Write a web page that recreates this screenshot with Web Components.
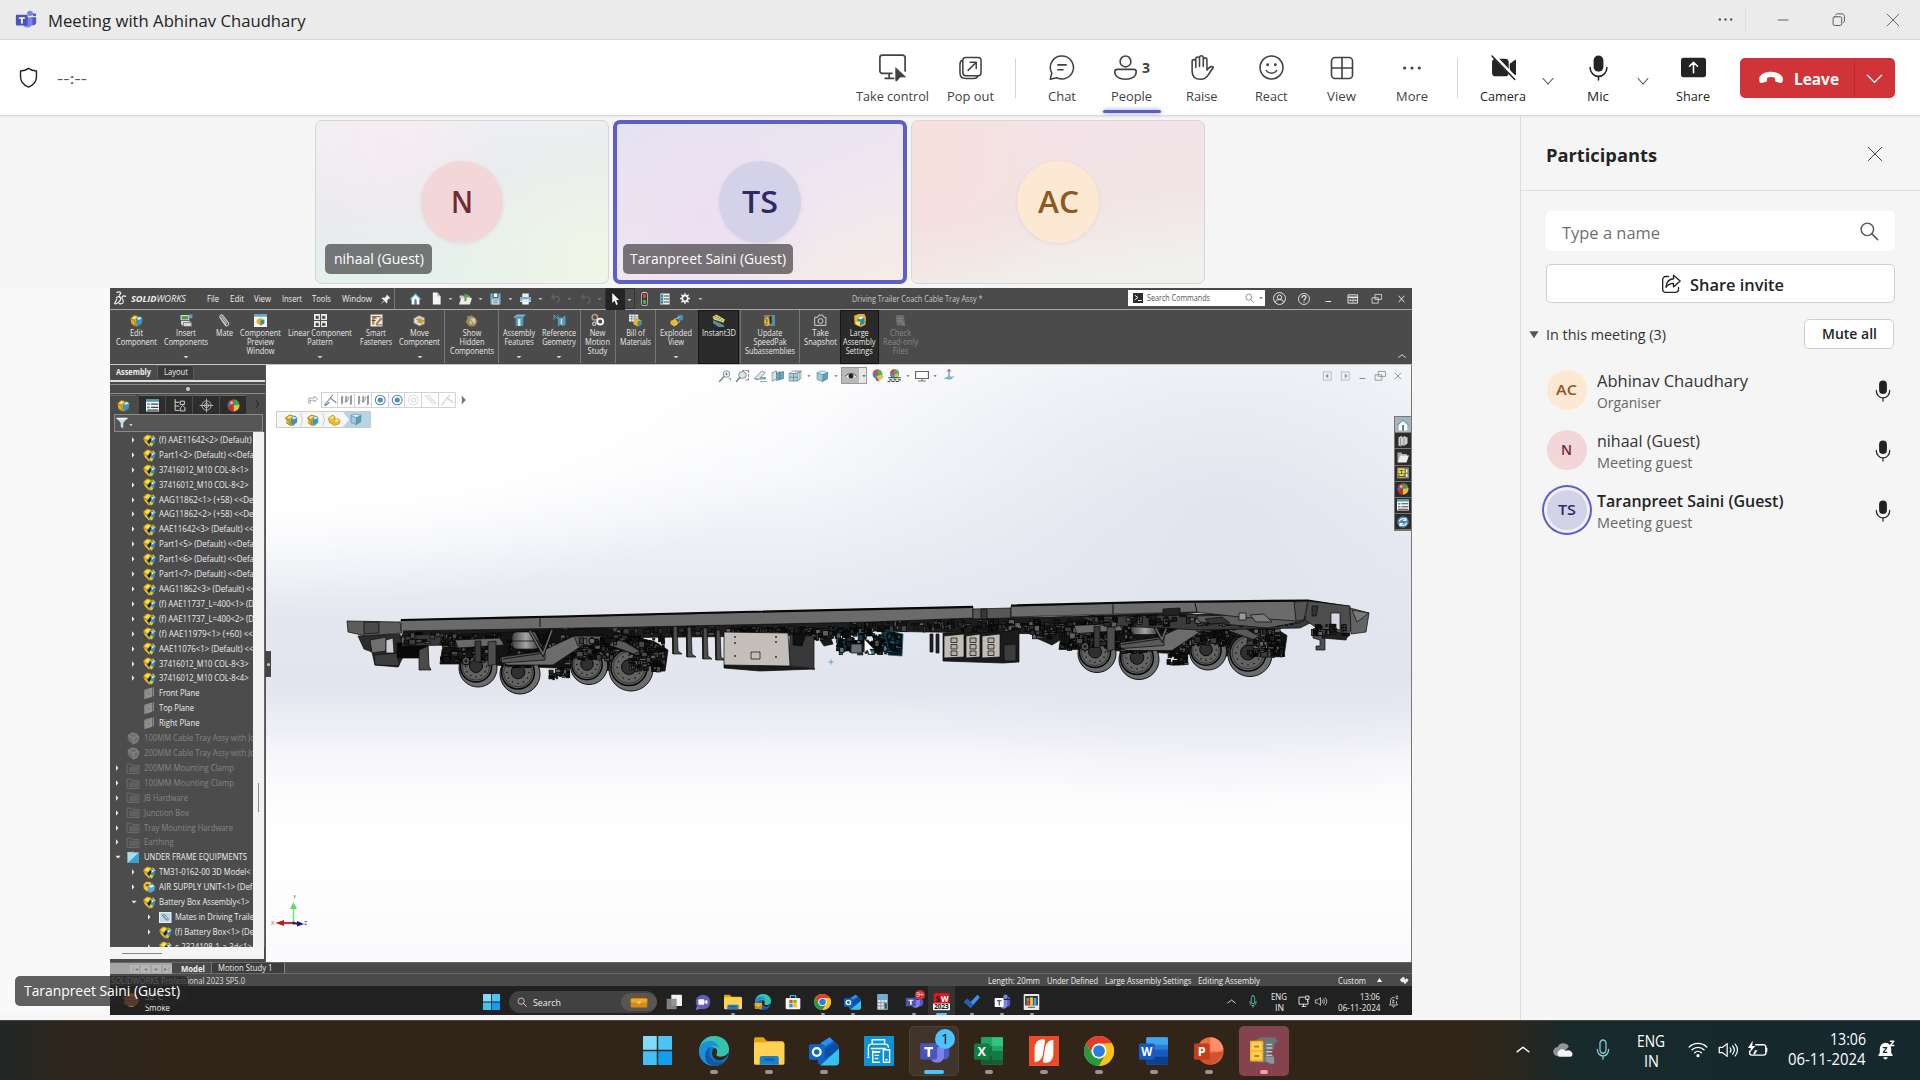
<!DOCTYPE html>
<html lang="en">
<head>
<meta charset="utf-8">
<title>Meeting with Abhinav Chaudhary</title>
<style>
html,body{margin:0;height:100%}
body{width:1920px;height:1080px;overflow:hidden;font-family:"Open Sans","Noto Sans",sans-serif;background:#f5f5f5;color:#242424}
</style>
</head>
<body>
<meeting-app></meeting-app>
<script>
const BASE=`*{box-sizing:border-box}:host{display:block}svg{display:block;overflow:visible}`;
class Base extends HTMLElement{
  connectedCallback(){
    if(this.shadowRoot)return;
    this.attachShadow({mode:'open'}).innerHTML=`<style>${BASE}${this.css?this.css():''}</style>${this.html()}`;
    if(this.ready)this.ready();
  }
  a(n,d=''){return this.hasAttribute(n)?this.getAttribute(n):d}
}
/* Lays children out left to right at given starts, as margins of a flex row */
const flow=(x0,items)=>{let x=x0;return items.map(([l,w,h,st=''])=>{const s=`<div style="flex:none;margin-left:${(l-x).toFixed(2)}px;width:${w}px;${st}">${h}</div>`;x=l+w;return s}).join('')};
const T=(w,t,st='')=>`<fit-text w="${w}" style="${st}">${t}</fit-text>`;
const esc=s=>s.replace(/</g,'&lt;').replace(/>/g,'&gt;');

/* Text squeezed or stretched to a given width */
customElements.define('fit-text',class extends Base{
  css(){return `:host{flex:none;white-space:nowrap}span{display:inline-block;transform-origin:0 50%;text-align:center}`}
  html(){return `<span><slot></slot></span>`}
  ready(){const w=+this.a('w'),s=this.shadowRoot.querySelector('span');this.style.width=w+'px';const n=s.getBoundingClientRect().width;if(n)s.style.transform=`scaleX(${w/n})`}
});

const S=(d,w=1.3,c='currentColor')=>`<path d="${d}" fill="none" stroke="${c}" stroke-width="${w}" stroke-linecap="round" stroke-linejoin="round"/>`;
const F=(d,c='currentColor')=>`<path d="${d}" fill="${c}"/>`;
const R=(x,y,w,h,c,r=0,e='')=>`<rect x="${x}" y="${y}" width="${w}" height="${h}" rx="${r}" fill="${c}" ${e}/>`;
const C=(x,y,r,c,e='')=>`<circle cx="${x}" cy="${y}" r="${r}" fill="${c}" ${e}/>`;
const TX=(x,y,s,t,c='#fff',w=700)=>`<text x="${x}" y="${y}" font-size="${s}" font-weight="${w}" fill="${c}" text-anchor="middle" font-family="Open Sans,sans-serif">${t}</text>`;
const ICONS={
 teams:C(17.2,4.2,3.4,'#7b83eb')+C(22.2,6,2,'#5059c9')+F('M19 9h5.2v7a3.6 3.6 0 0 1-5.2 3z','#5059c9')+F('M9 9h11v8.500a5.800 5.800 0 0 1-11 1z','#7b83eb')+R(1,6,13.500,13.500,'#4b53bc',1.200)+F('M4.300 9h7v1.900H8.900v6.300H6.800v-6.300H4.300z','#fff'),
 teamsLight:C(17.2,4.2,3.4,'#7b83eb')+C(22.2,6,2,'#5059c9')+F('M19 9h5.2v7a3.6 3.6 0 0 1-5.2 3z','#5059c9')+F('M9 9h11v8.500a5.800 5.800 0 0 1-11 1z','#7b83eb')+R(1,6,13.500,13.500,'#fff',1.200)+F('M4.300 9h7v1.900H8.900v6.300H6.800v-6.300H4.300z','#4b53bc'),
 shield:S('M12 2.500c2.700 2 5.400 2.600 8.300 2.700v6.300c0 5-3 8.300-8.300 10.500-5.300-2.200-8.300-5.500-8.300-10.500V5.200C6.600 5.100 9.300 4.500 12 2.500z',1.500),
 control:S('M11.500 17.200H3A2.200 2.200 0 0 1 .8 15V3.200A2.200 2.200 0 0 1 3 1h18a2.200 2.200 0 0 1 2.200 2.200V15M9 17.500v4M5.500 21.700h7.500',1.5)+F('M14.500 11.500l9.800 9.200h-5.300l-3 3.300c-.6.6-1.500.4-1.500-.6z'),
 popout:S('M7 1.500h13a3 3 0 0 1 3 3v13a3 3 0 0 1-3 3H7a3 3 0 0 1-3-3v-13a3 3 0 0 1 3-3zM4 4.500C2 5 1 6 1 8.500v9c0 4 2 6 6 6h8c2.500 0 4.300-1 4.800-2.800M9.500 15l8-8M11.500 6.500h6.500V13',1.6),
 chat:S('M12.500 1a11 11 0 1 1-5 20.800L1.200 23.200l1.500-5.800A11 11 0 0 1 12.500 1zM8.500 9.500h8M8.500 14.200h5',1.5),
 people:C(12,6.2,5.2,'none','stroke="currentColor" stroke-width="1.5"')+S('M4 13.800h16a2.300 2.300 0 0 1 2.300 2.300c0 4.600-4.600 7.200-10.300 7.200S1.700 20.700 1.700 16.100A2.300 2.300 0 0 1 4 13.800z',1.5),
 hand:S('M3 13V6.200a1.700 1.700 0 0 1 3.500 0V12M6.500 11V3.700a1.700 1.700 0 0 1 3.600 0V11M10.100 10.500V2.500a1.700 1.700 0 0 1 3.600 0V11M13.700 11V4.500a1.700 1.700 0 0 1 3.500 0v10c2-2.800 3.500-3.800 5.500-3.200.8.3.8 1 .2 1.600-1.700 1.500-2.700 3.600-4.200 6-1.700 2.800-3.800 4.400-7.500 4.400C5.500 23.300 3 20 3 15.500V12',1.5),
 smile:C(12,12,11,'none','stroke="currentColor" stroke-width="1.5"')+C(8.300,9.300,1.400,'currentColor')+C(15.700,9.300,1.400,'currentColor')+S('M7 15c2.500 3.300 7.500 3.300 10 0',1.5),
 view:S('M5 1.500h14A3.500 3.500 0 0 1 22.500 5v14a3.500 3.500 0 0 1-3.500 3.500H5A3.500 3.500 0 0 1 1.500 19V5A3.500 3.500 0 0 1 5 1.500zM12 1.500v21M1.500 12h21',1.6),
 dots:C(4,12,1.7,'currentColor')+C(12,12,1.7,'currentColor')+C(20,12,1.7,'currentColor'),
 camoff:F('M4.500 3.500h9A3.500 3.500 0 0 1 17 7v10a3.500 3.500 0 0 1-3.500 3.500h-9A3.500 3.500 0 0 1 1 17V7a3.500 3.500 0 0 1 3.500-3.500zM18 8.500l5-3.800c.5-.3 1 0 1 .5v13.600c0 .6-.5.8-1 .5l-5-3.800z')+S('M2.500.5L24 23',3.6,'#fff')+S('M1 1l21.800 22.500',1.5),
 mic:R(7.300,.5,9.400,15.500,'currentColor',4.700)+S('M4 12v.5a8 8 0 0 0 16 0V12M12 20.500V24',1.500),
 micO:S('M12 1.200a4 4 0 0 1 4 4v7a4 4 0 0 1-8 0v-7a4 4 0 0 1 4-4zM4.500 12a7.500 7.500 0 0 0 15 0M12 19.500V23',1.7),
 share:R(0,2.700,24,18.600,'currentColor',2.5)+S('M12 17V7M8.200 10.800L12 7l3.800 3.800',1.5,'#fff'),
 chev:S('M2 7.500L12 17.500l10-10',1.8), chevU:S('M2 17L12 7l10 10',2.6), chevR:S('M7 2l10 10L7 22',3),
 phone:F('M12 5.800c5.400 0 10 2.200 11.500 5.400.6 1.600.5 3.400-.1 4.700-.4.900-1 1.200-2 1l-3.900-.9c-.9-.2-1.300-.7-1.400-1.600l-.3-2.700c-2.500-.9-5.100-.9-7.600 0l-.3 2.700c-.1.900-.5 1.400-1.400 1.600l-3.900.9c-1 .2-1.600-.1-2-1-.6-1.300-.7-3.100-.1-4.700C2 8 6.600 5.800 12 5.800z'),
 x:S('M2 2l20 20M22 2L2 22',1.5), xs:S('M3 3l18 18M21 3L3 21',3), min:S('M2 12h20',1.8), mins:S('M3 20h17',3),
 max:S('M5 7h10a3 3 0 0 1 3 3v10a3 3 0 0 1-3 3H5a3 3 0 0 1-3-3V10a3 3 0 0 1 3-3zM7 3.500C7.500 2 8.500 1.500 10 1.500h8c3 0 5 2 5 5v8c0 1.500-.5 2.500-2 3',1.8),
 search:C(10,10,7.500,'none','stroke="currentColor" stroke-width="1.7"')+S('M15.500 15.500L22.500 22.500',1.9),
 invite:S('M9 3H5.500A3.500 3.500 0 0 0 2 6.500v12A3.500 3.500 0 0 0 5.500 22h12a3.500 3.500 0 0 0 3.500-3.500V16M15 1.500L23 8.500l-8 7v-4.200c-4 0-6.500 1.200-9 4.700C6.500 9.500 10 6 15 5.700z',1.6),
 tri:F('M1 5h22L12 20z'), triR:F('M6 1v22L20 12z'), caret:F('M2 7h20L12 18z'),
 win:['0 0','12.6 0','0 12.6','12.6 12.6'].map((p,i)=>{const[q,r]=p.split(' ');return R(q,r,11.400,11.400,['#7fdcfb','#4cc4f8','#45bff6','#149df0'][i],.5)}).join(''),
 edge:C(12,12,12,'#1577c9')+F('M.300 10C1.500 3.500 6.500 0 12 0c7 0 12 4.500 12 10.500 0 4-3 6-6.500 6-3 0-4-1-3.500-2.200 1.200-2.500-.5-5.800-4-5.800C6 8.500 1.500 9 .3 14z','#36c3ae')+F('M.200 10C2 5 6 3.500 9.500 4c4 .5 6.500 3 7 7 0-2-2.500-3.500-6-3-4.500.7-6.500 4.500-5.500 9 1 4 4.500 6.700 8 7C5 24 0 19 0 12z','#1b8fd8')+F('M9.500 9C7 12 8 20 15 20.800c3 .3 5.500-.7 7.300-2.200C20 22 16.500 24 12.500 24 7 23.500 4.500 19 5 15.500 5.500 12 7.500 10 9.500 9z','#0c59a4')+F('M12 9.500c2.300 0 3.300 2.600 2 4.800-.6 1.200.4 2.200 3.500 2.200 3 0 5-1.300 6-3.500C23 17 20 19.500 16.500 19.500 11 19.500 8.500 13 12 9.500z','#31251a'),
 folder:F('M1.500 1h6l2.500 3H22a1.500 1.500 0 0 1 1.500 1.500V12H0V2.500A1.500 1.500 0 0 1 1.500 1z','#e5a50a')+R(0,5,24,18,'#ffd252',1.5)+F('M4.500 23v-5.500A1.500 1.500 0 0 1 6 16h12a1.500 1.500 0 0 1 1.500 1.500V23z','#1b7fd0')+R(8,18,8,1.500,'#0b5ba0',.7),
 outlook:F('M7 7.500L16.500 1l7 6.500v13A2.500 2.500 0 0 1 21 23H9.500A2.500 2.500 0 0 1 7 20.500z','#0f62c0')+F('M9.500 5.600l7-4.600 3 2.800L8 11.500z','#2f8ff0')+F('M12 11l9-6 2.500 2.500V12L11 19z','#0b4ea5')+F('M24 10v11a2.500 2.500 0 0 1-2.500 2.500H9z','#36c0f2')+R(0,6.500,12.500,12.500,'#1066c8',1.300)+C(6.200,12.800,3.100,'none','stroke="#fff" stroke-width="1.800"'),
 printer:R(0,0,24,24,'#0b93d3')+S('M6.500 6V3h10v3M3.500 15.500V9a2.500 2.500 0 0 1 2.500-2.500h11A2.500 2.500 0 0 1 19.500 9M6 10h11M4 17H3M7 13h5M7 12v9h5.500M12.500 12.500H7M9 15.500h2.500M9 18h2',1.100,'#fff')+S('M15.500 11h5v10h-5zM17.500 19h1',1.100,'#fff'),
 excel:R(6,1,18,22,'#21a366',1.500)+R(6,1,9,7.300,'#21a366')+R(15,1,9,7.300,'#33c481')+R(6,8.300,9,7.300,'#107c41')+R(15,8.300,9,7.300,'#21a366')+R(6,15.600,18,7.400,'#185c37')+R(15,12,9,7,'#107c41')+R(0,6,13,13,'#107c41',1.200)+TX(6.500,16.400,10.500,'X'),
 nitro:R(0,0,24,24,'#ee4a23')+F('M4.500 21V10c0-4.500 2.500-7.500 6.500-7.500 2 0 2.200 1.500 2 3.500l-1.200 7c-.7 4-3 7.500-7.300 8z','#fff')+F('M19.500 3v11c0 4.500-2.500 7.500-6.500 7.500-2 0-2.200-1.500-2-3.500l1.200-7c.7-4 3-7.500 7.300-8z','#fff')+S('M13.200 4.500L10.800 19.500',.9,'#ee4a23'),
 chrome:C(12,12,12,'#fbc116')+F('M1.600 6A12 12 0 0 1 22.400 6H12a6 6 0 0 0-5.200 9z','#e33b2e')+F('M1.600 6A12 12 0 0 0 12 24l5.200-9A6 6 0 0 1 6.800 15z','#249a41')+F('M22.400 6A12 12 0 0 1 12 24l5.200-9a6 6 0 0 0 0-9z','#fbc116')+C(12,12,6,'#fff')+C(12,12,4.700,'#2a7de1'),
 word:R(6,1,18,22,'#2b7cd3',1.500)+R(6,1,18,6,'#41a5ee',1)+R(6,11,18,6,'#185abd')+R(6,16.500,18,6.500,'#103f91',1)+R(0,6,13,13,'#185abd',1.200)+TX(6.500,16,9.500,'W'),
 ppt:C(13.500,12,11,'#ed6c47')+F('M13.500 1a11 11 0 0 1 10.800 9L22 13l-8.500-1z','#ff8f6b')+F('M3 15c3 10 18 11 21.500-3z','#d35230')+R(0,6,13,13,'#c43e1c',1.200)+TX(6.500,16.400,10.500,'P'),
 zip:F('M4 4l5-3h12l2 3-3 3v4l-4 1-3 10H7l-3-3z','#68747a')+R(0,4,11,17,'#f7b322',1)+R(1.200,5.200,8.600,6.500,'#ffd257',.5)+R(1.200,13,8.600,6.500,'#ffd257',.5)+R(3.500,8,4,1.500,'#b87c0b')+R(3.500,15.800,4,1.500,'#b87c0b')+S('M14 7h4M14 10h4M14 13h4M14 16h4',1.300,'#bbc3c7')+F('M13 17h7v6h-3l-4-2z','#8b979c'),
 cloud:F('M6 19.500a5.500 5.500 0 0 1-.500-11A7.500 7.500 0 0 1 19 8l-9 9z','#8f9698')+F('M7 20a5 5 0 0 1 0-7c3-3 6-2 8 0 4-2 8.500.500 8.500 4a3.300 3.300 0 0 1-3.500 3z','#f4f4f4'),
 wifi:S('M1.500 9.500a15 15 0 0 1 21 0M4.800 13a10.300 10.300 0 0 1 14.400 0M8 16.500a5.700 5.700 0 0 1 8 0',1.700)+C(12,20,1.900,'currentColor'),
 speaker:S('M1.500 8.500h4L11 3.500v17l-5.500-5h-4zM14.500 9a5 5 0 0 1 0 6M17.500 6.500a9 9 0 0 1 0 11M20.500 4a12.500 12.500 0 0 1 0 16',1.500),
 battery:S('M10 6h9a2.500 2.500 0 0 1 2.500 2.500v8A2.500 2.500 0 0 1 19 19H5.500A2.500 2.500 0 0 1 3 16.500V14M22.500 10.500v4',1.600)+F('M6.500 1L1 10h3.500L3 16l6.500-8.500H6z')+F('M7 18l2-5 3 0-3 5z'),
 bell:F('M12 4a6.500 6.500 0 0 1 6.500 6.500V15l2 3.500h-17l2-3.500v-4.500A6.500 6.500 0 0 1 12 4zM9.500 20h5c-.5 3-4.500 3-5 0z')+S('M9.500 9.500h4l-4 5h4',1.400,'#15262a')+S('M17.500 2.500h4l-4 4.500h4',1.600),
 bellO:S('M14 4.500a6.500 6.500 0 0 0-8.500 6V15l-2 3.500h17l-2-3.500v-3M9.500 20.500c.5 2.500 4.500 2.500 5 0M9.500 9.500h4l-4 5h4M17.500 2h4l-4 5h4',1.500),
 pc:S('M13 4H2v13h18v-6M8 21h8M11 17v4M16 2h6v6h-6zM19 8v4',1.700),
 pin:F('M14 1l9 9-2 1-2-.500-4 5 .500 5-2 2-5-6L2 23l-1-1 6.500-6.500-6-5 2-2 5 .500 5-4L13 3z'),
 home:F('M12 1L0 12h3.500v11H10v-7h4v7h6.500V12H24z','#fff')+S('M1 12L12 2l11 10',2.500,'#4fa7c9')+R(10,12,4,11,'#4689a3'),
 doc:F('M4 1h10l7 7v15H4z','#f4f4f4')+F('M14 1v7h7z','#aaa'),
 open:F('M1 5h7l2 2h11v4H1z','#c5c5c5')+F('M4 10h20l-4 13H0z','#eee')+F('M10 1l9 4-2 3-3-1v9l-4 1z','#5fa54a'),
 save:R(1,1,22,22,'#6db7d4')+R(6,1,12,8,'#333')+R(8,1,8,7,'#fff')+R(5,13,14,10,'#e8e8e8')+R(7,15,10,1.500,'#555')+R(7,19,10,1.500,'#555'),
 print:R(5,1,14,8,'#eee')+R(0,8,24,8,'#6db7d4')+R(5,13,14,10,'#fff')+R(0,16,24,2,'#dcdcdc'),
 undo:S('M4 8l5-5M4 8l5 5M4 8h11c7 0 7 11 1 12',3),
 arrow:F('M5 0v20l5-4.500L13.500 24l3.500-1.500L13.500 14H20z','#fff'),
 traffic:R(5,0,14,24,'#d8d8d8',5)+R(6.5,1.5,11,21,'#333',3)+C(12,7,4,'#e8372c')+C(12,17,4,'#42b447'),
 opts:R(1,1,22,22,'#eaf4f8')+R(1,1,7,22,'#6db7d4')+S('M3 6h3M3 12h3M3 18h3M10.500 6H21M10.500 12H21M10.500 18H21',2,'#333'),
 gear:C(12,12,6.500,'none','stroke="currentColor" stroke-width="4"')+S('M12 1v4M12 19v4M1 12h4M19 12h4M4.200 4.200L7 7M17 17l2.800 2.800M19.800 4.200L17 7M7 17l-2.800 2.800',3),
 asm:F('M1 8l7-6 7 2-2 4 3 3-5 3 3 8-4 1-7-4z','#e3b426')+F('M3 8l6-4 4 1-5 4z','#ffec8b')+F('M11 8l7-4 5 4-1 9-7 6-4-5z','#3d93b8')+F('M12 8l6-3 4 3-6 3z','#c9e9f3')+S('M1 8l7-6 7 2 5 1M3 18l7 5 6-1M2 9l6 3 2 9',1.2,'#7c5f10'),
 asmt:F('M1 6l7-5 7 2 5 5-2 8-7 4-6-3-4-6z','#c99c12')+F('M3 7l6-4 5 2-3 5-4 1z','#ffe03e')+F('M12 8l7-3 4 4-1 9-9 5-2-6z','#3e8db0')+F('M13 10l6-3 2 3-5 4z','#d1ecf5')+S('M4 14l8 9M19 4l4 5',2,'#f1d64a')+F('M8 15l6-7 3 3-5 8z','#222')+F('M14 16l6 3-3 5-5-3z','#e9c72b'),
 asm2:F('M1 6l6-5 9 2-1 6-5 3 4 5-7 3-6-6z','#efc62b')+F('M10 9l8-4 5 4-1 9-8 5-5-4z','#57a9cb')+F('M11 10l7-3 3 3-6 3z','#dff3f9')+F('M4 8l5-3 3 2-4 4z','#7a5d05'),
 part:F('M1 8l8-6 5 3v6l6-2 4 4-2 7-9 3-10-6z','#e8bd32')+F('M3 8l7-4 3 2-6 4zM13 12l6-2 3 2-6 4z','#fff0a0')+S('M1 8l8-6 5 3v6l6-2 4 4-2 7-9 3-10-6z',1,'#8c701b'),
 cube:F('M2 6l9-4 11 3-1 13-9 5-10-4z','#9ecadd')+F('M2 6l9-4 11 3-9 4z','#d9eff6')+F('M13 9l9-4-1 13-9 5z','#5f9dba')+S('M2 6l11 3-1 14M13 9l9-4M2 6v13l10 4 9-5 1-13-11-3z',1,'#41768c'),
 wirecube:R(1,7,15,15,'#a9d3e3')+S('M1 7h15v15H1zM1 7l6-5h15v15l-6 5M16 7l6-5M1 14.500h15M8.500 7v15M12 4h9M19 5v14',1.200,'#55727f'),
 green:R(1,2,16,9,'#d9ead4')+R(3,4,12,6,'#4e9b4a')+F('M2 12h15l5 4v7H7l-5-4z','#ddd')+S('M2 12h14l5 4M7 16h14v7H7z',1.300,'#555')+R(16,1,7,7,'#6a9fb5'),
 clip:S('M3 6l10 14c3 4 9 0 6-4L9 3C7 0 2 3 4 6l10 13M7 5l9 12',2,'#c9c9c9'),
 preview:R(0,0,24,24,'#f5f5f5')+R(0,0,24,5,'#5fa9c8')+F('M5 11l7-4 7 4v7l-7 3-7-4z','#e0b125')+F('M12 12l7-2v7l-7 4z','#3b87aa'),
 pattern:R(0,0,11,11,'#eee')+R(13,0,11,11,'#eee')+R(0,13,11,11,'#eee')+R(13,13,11,11,'#eee')+F('M3 3h6v6H3zM15 3h6v6h-6zM3 16h6v6H3zM15 16h6v6h-6z','#667f52')+F('M4 4l4 2-4 2zM16 4l4 2-4 2zM4 17l4 2-4 2zM16 17l4 2-4 2z','#222'),
 fastener:R(1,1,22,22,'#efefef')+F('M4 5h8v4H8v11H4zM10 18L20 6l3 3-10 11z','#c47a35')+S('M4 5h15M4 12h6M12 20h10',1.500,'#444'),
 move:F('M2 8l9-5 10 4v11l-9 4-10-5z','#ddd')+F('M5 10l6-3 4 3-5 3zM7 15l10-8 0 4 5 0-6 7z','#c79c35')+S('M2 8l9-5 10 4v11l-9 4-10-5z',1.500,'#888'),
 hidden:F('M5 4h10l4 4 4 6-5 8-9 1-6-6z','#b78f25')+F('M9 8h10v10H9z','#ccc')+S('M5 4l13 17M2 15l10-12',2,'#8e8e8e'),
 feat:F('M2 6l6-4h14l-3 5v14l-5 2V9H9v12l-4 2V8z','#4d9fbe')+F('M9 9h5v13l-5 0z','#d8edf4')+S('M2 6l6-4h14',1.500,'#a6d8ea'),
 refg:S('M2 10V2l7 7V2',1.500,'#5fb4d6')+F('M9 8l5-3v15l-5 3zM17 6l6-3v17l-6 3z','#4d9fbe')+R(14,8,3,12,'#bfe3ef'),
 motion:C(7,6,5,'none','stroke="#b99a83" stroke-width="3"')+C(17,14,5.500,'none','stroke="#f3f3f3" stroke-width="3.500"')+C(6,18,3,'none','stroke="#bbb" stroke-width="2.500"'),
 bom:R(0,1,17,13,'#eaf4f8')+S('M0 5h17M0 9h17M5 1v13M11 1v13',1,'#567')+F('M8 13l7-5 8 4v8l-7 3-8-4z','#e2b528')+F('M16 14l7-2v8l-7 3z','#388cb0'),
 explode:F('M1 13l8-4 5 4v6l-6 4-7-4z','#e6b92a')+F('M14 3l7-2 3 2v7l-6 3-4-2z','#4490b0')+S('M8 10l9-4M10 20l8-6',1.500,'#ddd'),
 instant:F('M1 5l7-4 16 9-3 6L3 10z','#d9d36a')+F('M2 11l19 9 2 4H12L2 17z','#5f8aa0')+S('M5 6l3-2M9 8l3-2M13 10l3-2M17 13l2-2',1.200,'#444'),
 speed:F('M2 2h20v20H2z','#8d856f')+F('M2 14l6-9 7 12-8 6z','#edc22a')+F('M14 5l8-2v17l-6 3z','#4a94b0')+S('M7 10v5M7 18v1',1.500,'#222')+R(12,4,4,14,'#292929'),
 camera:S('M2 6h5l2-4h7l2 4h4v15H2z',1.700,'#ddd')+C(12,13,4.500,'none','stroke="#ddd" stroke-width="1.700"'),
 large:F('M2 3l8-3h11l3 6-1 14-9 4-11-5z','#e6b52b')+F('M9 7l9-3 3 3v10l-8 4-5-4z','#2b86aa')+F('M9 7l8-3 3 3-7 3z','#f3fafc')+F('M5 14l9 0-2 8-6-2z','#ffe164'),
 check:F('M3 2h15l3 19H5z','#6b6b6b')+S('M6 8h9M7 13h6M12 12l7 9',2,'#868686'),
 ball:C(12,12,11,'#3f79bd')+F('M12 1a11 11 0 0 1 10.800 9L12 12z','#45a04a')+F('M12 1A11 11 0 0 0 2 8l10 4z','#d83c30')+F('M22.800 10A11 11 0 0 1 12 23l0-11z','#efbd32')+F('M12 23A11 11 0 0 1 1.500 15l5-3L12 12z','#c92f27')+C(8.500,7,2.500,'#fff','opacity=".7"'),
 ball2:C(12,10,9,'#3f8bbd')+F('M12 1a9 9 0 0 1 8.800 8L12 11z','#5fae4a')+F('M12 1A9 9 0 0 0 3 8l9 3z','#d05040')+F('M10 14l8-4 6 4-9 9z','#e5c452')+F('M10 14l5 9-6-2z','#b74b3c'),
 scene:C(12,9,8.500,'#4b8dbd')+F('M12 .5a8.500 8.500 0 0 1 8 8L12 10z','#5fae4a')+F('M12 .5A8.500 8.500 0 0 0 4 7l8 3z','#d05040')+F('M12 10l8-2-3 8-5 1z','#e5bf3b')+S('M1 16h22M3 20h4M11 20h4M19 20h4M0 23h3M7 23h4M15 23h4',2,'#444'),
 list:R(0,1,24,22,'#f4f4f4')+R(0,1,24,4,'#4c97b5')+R(2,8,5,3,'#4c97b5')+R(2,14,5,3,'#4c97b5')+S('M10 9.500h12M10 15.500h12M3 20.500h19',2,'#444'),
 conf:S('M4 1v20h7M4 6h7M4 13h7M14 4h7v6h-7zM14 16l4-4 4 4v6h-8z',1.800,'#d6d6d6'),
 target:C(12,12,8.5,'none','stroke="#c5c5c5" stroke-width="1.600"')+C(12,12,4,'none','stroke="#c5c5c5" stroke-width="1.500"')+S('M12 0v24M0 12h24',1.500,'#c5c5c5'),
 funnel:F('M0 1h24l-9 10v12l-6-4v-8z','#bfe3ef')+S('M0 1h24',3,'#fff'),
 plane:F('M4 6l13-4v16L4 22z','#828282')+S('M4 6l13-4v16L4 22zM8 9l7-2v9l-7 2zM20 1v16',1.400,'#a5a5a5'),
 ghost:F('M2 7l8-5 8 2 5 6-3 9-8 4-6-3-5-7z','#6e6e6e')+S('M4 8l8 4 8-4M12 12v10M2 7l8-5 8 2 5 6-3 9-8 4',2,'#868686'),
 fold:S('M1 4h8l2 3h12v15H1z',1.500,'#747474')+R(4,9,17,11,'#606060'),
 bluef:R(1,3,22,20,'#3ba3cf')+F('M1 3h22L1 23z','#a9dcee')+S('M1 3h8l2 -2',1.500,'#ddd'),
 mates:R(0,2,24,21,'#f2f2f2')+R(2,4,20,17,'#bfd8e3')+S('M6 8l8 9c2 2 5 0 3-3l-6-7c-2-2-4 0-3 2l6 7',1.500,'#42748c'),
 zoomfit:C(15,8,6.500,'none','stroke="#6b7f8a" stroke-width="1.800"')+S('M10 13L1 23',3,'#7b8a92')+S('M12 8h6M15 5v6M20 17h3v3',1.200,'#555'),
 zoomarea:C(12,10,7,'#dbe6ea','stroke="#6b7f8a" stroke-width="1.600"')+S('M7 15L1 23',3,'#7b8a92')+S('M12 1h3M18 1h5v4M23 9v4M23 17v3h-5',1.500,'#666'),
 pencil:F('M1 17L14 2l7 4L9 19z','#e4e4e4')+S('M1 17L14 2l7 3L9 19zM12 23h11M9 19l-8-2',1.500,'#7e8a90')+F('M11 14h11v5H11z','#7cabbd'),
 section:F('M1 5l8-3v16l-8 4z','#cfe6ee')+F('M9 6l14-3v14L9 21z','#6aa6bf')+S('M1 5l8-3v16l-8 4zM9 6l14-3v14L9 21M15 4v15',1.200,'#4e6670'),
 eye:F('M1 12Q12 1 23 12Q12 22 1 12z','#eee')+C(12,12,5,'#222')+S('M1 12Q12 1 23 12',2,'#555'),
 monitor:R(1,3,22,14,'#fff',0,'stroke="#666" stroke-width="2"')+S('M12 17v4M6 22h12',2,'#777'),
 axis:S('M12 1v16M9 4l3-3 3 3',1.700,'#555')+F('M1 18l8-4h14l-8 6z','#7cb4cb'),
 user:C(12,12,11,'none','stroke="currentColor" stroke-width="1.700"')+C(12,9.500,4,'none','stroke="currentColor" stroke-width="1.700"')+S('M5 19v-2c0-4 14-4 14 0v2',1.700),
 help:C(12,12,11,'none','stroke="currentColor" stroke-width="1.700"')+S('M8 9c0-5 8-5 8 0 0 3-4 3-4 6M12 18v.500',2.200),
 panes:S('M1 2h22v20H1z',2.200)+S('M2 8h20',3.500)+S('M4 15h16M12 11v9M7 13l-3 2 3 2M17 13l3 2-3 2',1.600), restore:S('M8 1h15v12H8zM1 9h14v13H1z',1.800),
 paneL:S('M2 2h20v20H2z',1.500)+F('M14 6v12l-8-6z'), paneR:S('M2 2h20v20H2z',1.500)+F('M10 6v12l8-6z'),
 prompt:R(0,0,24,24,'#2b2b2b')+S('M5 6l7 5-7 5M13 18h7',2.300,'#fff'),
 books:F('M3 5l5-3 3 2v16l-4 3-4-2zM11 5l4-3 3 2v15l-4 3-3-2zM18 5l3-1v13l-3 2z','#cfcfcf')+S('M7 6v16M14 6v16',1,'#555'),
 pfold:F('M1 3h8l2 3h9v4H6l-5 12z','#a9a9a9')+F('M6 9h18l-5 14H1z','#eee'),
 yel:R(0,1,24,22,'#8a8468')+R(3,3,12,9,'#f3da3b')+R(5,14,8,7,'#f3da3b')+R(18,5,3,6,'#eee')+R(18,14,3,6,'#eee')+S('M6 7h6M9 9v5M4 19h10',1.500,'#333'),
 sync:C(12,12,11.500,'#4a89b3')+S('M5 10c2-6 11-6 13-1M19 14c-2 6-11 6-13 1M18 4v5h-5M6 20v-5h5',2.400,'#fff'),
 ring:C(12,12,9.500,'none','stroke="#4f8ba8" stroke-width="2"')+C(12,12,5,'#4791b5'), ringG:C(12,12,9.500,'none','stroke="#ddd" stroke-width="2"')+C(12,12,4,'none','stroke="#d6d6d6" stroke-width="2"'),
 mateA:S('M1 22L12 8l5-6M12 8l11 9M3 23l7-6',2.200,'#6f8d96'), mateG:S('M1 22L12 8l5-6M12 8l11 9',2,'#c9c9c9'),
 matePar:F('M2 5l4-2v16l-4 3zM10 5l4-2v12l-4 3zM19 4l4-2v18l-4 3z','#9b9b9b')+S('M9 14c3 5 7 0 8-8',1.500,'#888'), mateD:S('M2 2l15 17M8 2l15 18',2,'#d0d0d0'),
 hook:S('M5 22v-8h10v5l8-8-8-8v5H2v14',1.800,'#888'),
 taskview:R(8,1,16,17,'#f2f2f2',1)+R(1,7,15,16,'#8a8a8a',1,'opacity=".9"'),
 bubble:C(12,12,11,'#5b5fc0')+F('M3 18l-2 6 8-2z','#7277d8')+R(5,8,9,8,'#fff',1.500)+F('M14.500 11l4-2.500v7l-4-2.500z','#fff'),
 edgebag:'', store:S('M8 6V2.500h8V6',2,'#36b5f0')+R(1,6,22,17,'#f4f4f4',2)+R(6.500,9,5,5,'#f25022')+R(12.500,9,5,5,'#7fba00')+R(6.500,15,5,5,'#00a4ef')+R(12.500,15,5,5,'#ffb900'),
 bag:S('M8 6V2h8v4',2.4,'#8a4d09')+R(1,5,22,18,'#d98a12',2)+R(1,5,22,8,'#f0a927',2)+R(10,11,4,4,'#ffe08a'),
 calc:R(2,0,20,24,'#8fa3af',1.500)+R(4,2,16,5,'#4fb9e8')+['4 9','10 9','16 9','4 14','10 14','4 19','10 19'].map(p=>R(...p.split(' '),4,3,'#e8eef1')).join('')+R(16,14,4,8,'#2b556b'),
 todo:F('M0 12l5-5 5 5L20 1l4 4L10 21z','#3e8fe6')+F('M0 12l5-5 9 9-4 5z','#215fb4'),
 sw:R(1,0,22,20,'#d71920',2)+TX(7,12,12,'S','#111')+TX(16.5,12,11,'W')+R(0,14,24,9,'#f2f2f2',1)+TX(12,21.800,9,'2023','#111'),
 toys:R(1,0,22,24,'#e8e8e8',1)+R(3,3,18,14,'#333')+R(5,6,4,11,'#e64b3c')+R(10,5,4,12,'#f6c343')+R(15,6,4,11,'#3da6e3')+R(5,6,4,4,'#58b34d')+R(7,19,10,2,'#777'),
 smoke:C(12,12,10,'#f29b2e')+S('M0 9h16M4 13h18M2 17h16',2.500,'#c65c50'),
 dsl:S('M5 2c6-2 9 1 4 4M10 8c-3 0-5 1-6 2M9 9c4 0 3 5-1 8-3 2-6 3-7 2l4-7M20 8c-6-2-8 2-5 5 3 4 0 7-6 6',1.900,'#f3f3f3'),
 tag:F('M2 10l8-8 4 3v5l5-4 4 5-9 11-3-6-4 1z','#f0f0f0')
};
ICONS.edgebag=ICONS.edge+`<g transform="translate(-1 11) scale(.5)">${ICONS.bag}</g>`;
const I=(n,w,h,c='',st='')=>`<svg width="${w}" height="${h||w}" viewBox="0 0 24 24" preserveAspectRatio="none" style="flex:none;${c?`color:${c};`:''}${st}">${ICONS[n]}</svg>`;

customElements.define('title-bar',class extends Base{
  css(){return `:host{height:40px;background:#ebebeb;border-bottom:1px solid #d8d8d8;display:flex;align-items:center;font-size:17px;color:#242424}`}
  html(){return flow(0,[[14.5,21,I('teams',21,19)],[48,257.5,T(257.5,'Meeting with Abhinav Chaudhary'),'margin-top:1px'],[1717,17,I('dots',17,17,'#555')],[1745,1,'','height:24px;background:#ddd'],[1777,12,I('min',12,12,'#555')],[1832,13,I('max',13,13,'#555')],[1886,14,I('x',14,14,'#555')]])}
});
customElements.define('tool-button',class extends Base{
  css(){return `:host{flex:none;width:${this.a('width',70)}px;height:75px;display:flex;flex-direction:column;align-items:center;color:${this.a('color','#424242')};font-size:13px}
  .i{height:26px;margin-top:14.500px;display:flex;align-items:center;gap:4px;font-weight:700;font-size:14px}
  .i span{margin-top:-1px}.l{margin-top:5px;line-height:20px}.u{margin-top:4.500px;width:58px;height:3px;border-radius:2px;background:#5b5fc7;box-shadow:0 0 4px #8f92e6}`}
  html(){const s=this.a('size',25);return `<div class="i">${I(this.a('icon'),s)}${this.hasAttribute('count')?`<span>${this.a('count')}</span>`:''}</div><div class="l">${T(this.a('tw'),this.a('label'))}</div>${this.hasAttribute('active')?'<div class="u"></div>':''}`}
});
customElements.define('leave-button',class extends Base{
  css(){return `:host{flex:none;margin-left:12px;width:155px;height:40px;border-radius:5px;background:#d13438;color:#fff;display:flex;align-items:center;font-weight:700;font-size:16px}`}
  html(){return flow(0,[[19,24,I('phone',24,24)],[54,45,T(45,'Leave'),'margin-top:1px'],[114,1,'','height:40px;background:#b92c30'],[126,17,I('chev',17,17)]])}
});
customElements.define('meeting-toolbar',class extends Base{
  css(){return `:host{height:76px;background:#fff;border-bottom:1px solid #dcdcdc;box-shadow:0 1px 2px #0001;display:flex;align-items:flex-start;position:relative}
  .s{width:21.500px;height:76px;flex:none;display:flex;justify-content:center;padding-top:18px}.s::before{content:"";width:1px;height:40px;background:#d5d5d5}
  .c{width:20px;flex:none;margin-right:5px;padding:33.500px 4px 0}leave-button{margin-top:18px}.g{flex:1;display:flex}`}
  html(){const b=(i,l,tw,x='')=>`<tool-button icon="${i}" label="${l}" tw="${tw}" ${x}></tool-button>`;
   return `<div class="g">${flow(0,[[17,23,I('shield',23,23),'margin-top:26px'],[57,30,T(30,'--:--'),'margin-top:28px;font-size:15px;line-height:20px;color:#555']])}</div>
   ${b('control','Take control',73,'width="85" size="27"')}${b('popout','Pop out',47,'size="23"')}<div class="s"></div>
   ${b('chat','Chat',28)}${b('people','People',41,'count="3" active')}${b('hand','Raise',31.5)}${b('smile','React',32.5)}${b('view','View',29,'size="24"')}${b('dots','More',32,'size="22"')}<div class="s"></div>
   ${b('camoff','Camera',46,'color="#242424"')}<div class="c">${I('chev',12,14,'#555')}</div>${b('mic','Mic',22,'color="#242424"')}<div class="c">${I('chev',12,14,'#555')}</div>${b('share','Share',34,'color="#242424"')}<leave-button></leave-button><div style="width:25px"></div>`}
});
customElements.define('user-avatar',class extends Base{
  css(){const s=+this.a('size');return `:host{width:${s}px;height:${s}px;flex:none;border-radius:50%;background:${this.a('bg')};color:${this.a('fg')};display:flex;align-items:center;justify-content:center;padding-bottom:2px;box-sizing:border-box;font-weight:600;font-size:${s>50?31:15}px;${s>50?'box-shadow:0 1px 4px #0001;':''}${this.hasAttribute('ring')?'box-shadow:0 0 0 3px #f1f1f8,0 0 0 5px #5b5fc7;':''}}`}
  html(){return T(this.a('tw'),this.a('text'))}
});
customElements.define('name-tag',class extends Base{
  css(){return `:host{height:30px;line-height:29px;padding:0 8.500px;border-radius:5px;background:rgba(36,36,36,${this.a('alpha','.6')});color:#fff;font-size:14.500px;width:fit-content}`}
  html(){return T(this.a('tw'),this.a('text'))}
});
customElements.define('video-tile',class extends Base{
  css(){const on=this.hasAttribute('active');return `:host{width:294px;height:164px;flex:none;border-radius:7px;border:${on?'4px solid #5b5fc7':'1px solid #d6d6d6'};background:${this.a('bg')};display:grid;place-items:center;position:relative}
  user-avatar{grid-area:1/1}name-tag{position:absolute;left:${on?6:9}px;bottom:${on?6:9}px;padding:0 ${on?7:8.5}px}`}
  html(){return `<user-avatar size="82" bg="${this.a('abg')}" fg="${this.a('fg')}" text="${this.a('text')}" tw="${this.a('tw')}"></user-avatar>`+(this.a('name')?`<name-tag text="${this.a('name')}" tw="${this.a('nw')}"></name-tag>`:'')}
});
customElements.define('participant-row',class extends Base{
  css(){return `:host{height:60px;display:flex;align-items:center;padding-left:25.500px}.n{width:280px;margin-left:10.500px}.a{font-size:17px;line-height:22px;${this.hasAttribute('ring')?'font-weight:600;':'color:#333;'}}.b{font-size:14.500px;line-height:22px;color:#666}`}
  html(){return `<user-avatar size="40" bg="${this.a('bg')}" fg="${this.a('fg')}" text="${this.a('text')}" tw="${this.a('tw')}" ${this.hasAttribute('ring')?'ring':''}></user-avatar><div class="n" style="margin-top:4px"><div class="a">${T(this.a('nw'),this.a('name'))}</div><div class="b">${T(this.a('sw'),this.a('sub'))}</div></div>${I('mic',20,21,'#242424','margin-left:-4px')}`}
});
customElements.define('participants-panel',class extends Base{
  css(){return `:host{width:400px;border-left:1px solid #dcdcdc;background:#f5f5f5}
  .h{height:75px;border-bottom:1px solid #dedede;display:flex;align-items:center;padding-top:4px;font-weight:700;font-size:17.500px}
  .s{height:40px;margin:20px 25px 13px;background:#fff;border-radius:5px;display:flex;align-items:center;color:#707070;font-size:17px}
  .i{height:39px;margin:0 25px;background:#fff;border:1px solid #cfcfcf;border-radius:5px;display:flex;align-items:center;font-weight:600;font-size:17px}
  .m{height:30px;margin:16px 0 11px;display:flex;align-items:center;font-size:15px;color:#333}`}
  html(){return `<div class="h">${flow(0,[[24.5,111,T(111,'Participants')],[346,16,I('x',16,16,'#444'),'margin-top:-2px']])}</div>
  <div class="s">${flow(0,[[16,98,T(98,'Type a name'),'padding-top:2px'],[313,20,I('search',20,20,'#555')]])}</div>
  <div class="i">${flow(0,[[114,20,I('invite',20,20)],[143,94,T(94,'Share invite'),'padding-top:1px']])}</div>
  <div class="m">${flow(0,[[8,10,I('tri',10,11,'#555')],[25,120,T(120,'In this meeting (3)')],[283,90,T(55,'Mute all'),'height:30px;background:#fff;border:1px solid #cfcfcf;border-radius:5px;padding:4px 16.5px;font-weight:600;color:#242424;font-size:14.5px']])}</div>
  <participant-row bg="#fde9d3" fg="#8a5a22" text="AC" tw="21" name="Abhinav Chaudhary" nw="151" sub="Organiser" sw="64"></participant-row>
  <participant-row bg="#f3d6d8" fg="#6e2b34" text="N" tw="11" name="nihaal (Guest)" nw="103" sub="Meeting guest" sw="95.5"></participant-row>
  <participant-row ring bg="#d4d2e8" fg="#2f2a66" text="TS" tw="18" name="Taranpreet Saini (Guest)" nw="186.5" sub="Meeting guest" sw="95.5"></participant-row>`}
});

/* ---- shared CAD window ---- */
const caret=(x,y='')=>[x-2.5,5,I('caret',5,4,'#ddd'),y];
customElements.define('cad-menu',class extends Base{
  css(){return `:host{height:22px;background:#4b4a4a;border-bottom:1px solid #a7a7a7;display:flex;align-items:center;color:#eee;font-size:8.300px;line-height:12px}`}
  html(){const t=(a,b,s,st='')=>[a,b-a,T(b-a,s),st];const ic=(a,b,n,c='#eee',h)=>[a,b-a,I(n,b-a,h||Math.min(12,b-a),c)];
   return flow(110,[ic(114,128,'dsl','#eee',16),t(131,186,'<b>SOLID</b>WORKS','font-size:9px;font-style:italic'),t(207,219,'File'),t(230,244,'Edit'),t(254,271,'View'),t(282,302,'Insert'),t(312,331,'Tools'),t(342,372,'Window'),ic(381,391,'pin','#eee'),[394,1,'','height:21px;background:#777'],ic(410,421,'home','',12),ic(431,442,'doc','',13),caret(450),ic(459,472,'open','',12),caret(480),ic(490,501,'save','',12),caret(510),ic(520,531,'print','',12),caret(540),ic(550,561,'undo','#636363'),[567,5,I('caret',5,4,'#888')],ic(579,592,'undo','#5d5d5d'),[597,5,I('caret',5,4,'#888')],
   [605,30,`<div style="width:20px;height:21px;background:#242424;padding:4px 4px">${I('arrow',11,12)}</div><div style="padding:9px 2px">${I('caret',5,4,'#ddd')}</div>`,'display:flex;height:21px;border:1px solid #333'],ic(639,650,'traffic','',14),ic(660,670,'opts','',12),ic(680,690,'gear','#eee',11),caret(700),t(851.5,982,'Driving Trailer Coach Cable Tray Assy *','color:#c8c8c8'),
   [1128,137,flow(0,[[5,10,I('prompt',10,10)],[19,63,T(63,'Search Commands')],[117,9,I('search',9,10,'#666')],[130.5,4,I('caret',4,4,'#555')]]),'display:flex;align-items:center;background:#fff;height:16px;color:#555;margin-top:-2px'],
   ic(1273,1286,'user','#eee',13),ic(1298,1310,'help','#eee',12),[1325,7,I('mins',7,9)],ic(1348,1358,'panes','#eee',10),ic(1372,1382,'restore','#eee',10),[1398,7,I('xs',7,8)]])}
});
customElements.define('cad-ribbon',class extends Base{
  css(){return `:host{height:55px;background:#4c4b4b;border-bottom:1px solid #c5c5c5;display:flex;color:#e8e8e8;font-size:8.200px;line-height:9px}
  .b{display:flex;flex-direction:column;align-items:center;height:54px;padding-top:4px}.b fit-text{margin-top:1px}`}
  html(){const it=(cx,w,tw,ic,t,o={})=>[cx-w/2,w,`<div class="b" style="${o.st||''}">${I(ic,13,13)}<div style="height:28px">${T(tw,t)}</div>${o.c?I('caret',6,4,'#fff'):''}</div>`];
   const d=x=>[x,1,'','height:53px;background:#777'];
   return flow(110,[it(136.5,41,41,'asm','Edit<br>Component'),it(186,44,44,'green','Insert<br>Components',{c:1}),it(224.5,17,17,'clip','Mate'),it(260.5,41,41,'preview','Component<br>Preview<br>Window'),it(320,64,64,'pattern','Linear Component<br>Pattern',{c:1}),it(376,32,32,'fastener','Smart<br>Fasteners'),it(419.5,41,41,'move','Move<br>Component',{c:1}),d(444),it(471.5,44,44,'hidden','Show<br>Hidden<br>Components'),d(498),it(519,32,32,'feat','Assembly<br>Features',{c:1}),it(559,34,34,'refg','Reference<br>Geometry',{c:1}),d(580),it(597.5,25,25,'motion','New<br>Motion<br>Study'),d(614.5),it(635.5,31,31,'bom','Bill of<br>Materials'),d(655),it(676,32,32,'explode','Exploded<br>View',{c:1}),it(718.5,41,34,'instant','Instant3D',{st:'background:#2a2a2a;border:1px solid #151515;padding-top:3px'}),d(739.5),it(769.5,50,50,'speed','Update<br>SpeedPak<br>Subassemblies'),d(799),it(820.5,33,33,'camera','Take<br>Snapshot'),it(859.500,39,32.5,'large','Large<br>Assembly<br>Settings',{st:'background:#2a2a2a;border:1px solid #151515;padding-top:3px'}),it(900,35,35,'check','Check<br>Read-only<br>Files',{st:'color:#858585'}),[1398,8,I('chevU',8,6,'#fff'),'margin-top:43px']])}
});
const TREE=[[2,'asmt','(f) AAE11642<2> (Default) ',92.5],[2,'asmt','Part1<2> (Default) <<Defa',95],[2,'asmt','37416012_M10 COL-8<1>',89.5],[2,'asmt','37416012_M10 COL-8<2>',89.5],[2,'asmt','AAG11862<1> (+58) <<De',94.5],[2,'asmt','AAG11862<2> (+58) <<De',94.5],[2,'asmt','AAE11642<3> (Default) <<',94.5],[2,'asmt','Part1<5> (Default) <<Defa',95],[2,'asmt','Part1<6> (Default) <<Defa',95],[2,'asmt','Part1<7> (Default) <<Defa',95],[2,'asmt','AAG11862<3> (Default) <<',96],[2,'asmt','(f) AAE11737_L=400<1> (D',95],[2,'asmt','(f) AAE11737_L=400<2> (D',95],[2,'asmt','(f) AAE11979<1> (+60) <<',94],[2,'asmt','AAE11076<1> (Default) <<',94.5],[2,'asmt','37416012_M10 COL-8<3>',89.5],[2,'asmt','37416012_M10 COL-8<4>',89.5],[2,'plane','Front Plane',40.5,'n'],[2,'plane','Top Plane',35,'n'],[2,'plane','Right Plane',40.5,'n'],[1,'ghost','100MM Cable Tray Assy with Jc',110,'ng'],[1,'ghost','200MM Cable Tray Assy with Jc',110,'ng'],[1,'fold','200MM Mounting Clamp',90,'g'],[1,'fold','100MM Mounting Clamp',90,'g'],[1,'fold','JB Hardware',44,'g'],[1,'fold','Junction Box',45,'g'],[1,'fold','Tray Mounting Hardware',89,'g'],[1,'fold','Earthing',29.5,'g'],[1,'bluef','UNDER FRAME EQUIPMENTS',103,'d'],[2,'asmt','TM31-0162-00 3D Model<',91.5],[2,'asm2','AIR SUPPLY UNIT<1> (Def',93.5],[2,'asmt','Battery Box Assembly<1>',90.5,'d'],[3,'mates','Mates in Driving Traile',79],[3,'asmt','(f) Battery Box<1> (De',79],[3,'asmt','c-2324108-1-a-3d<1>',77]];
customElements.define('cad-tree',class extends Base{
  css(){return `:host{width:156px;flex:none;background:#4b4a4a;color:#eee;font-size:8.600px;line-height:14px;border-right:1px solid #555}
  .row{display:flex}.tabs{height:15px}.hr{height:1px;background:#8a8a8a}
  .it{height:20px;align-items:center}.t{height:515px;display:flex;background:#f2f2f2;border-right:1px solid #666}.l{width:143.500px;padding-top:.5px;overflow:hidden;background:#4c4c4c}.r{height:14.920px;display:flex;align-items:center}.v{width:11px;padding:351px 0 0 5px}.v::before{content:"";display:block;width:1px;height:29px;background:#8a8a8a}`}
  html(){return `<div class="row tabs">${flow(110,[[116,35,T(35,'<b>Assembly</b>')],[157,37,`<div style="padding-left:6px">${T(24,'Layout')}</div>`,'background:#3a3a3a;border:1px solid #5a5a5a;line-height:12px']])}</div>
  <div class="hr" style="background:#ddd;height:1.500px"></div><div class="hr" style="margin-top:2px"></div><div style="height:8.500px;display:flex;justify-content:center;align-items:center"><div style="width:4px;height:4px;border-radius:2px;background:#ccc"></div></div><div class="hr"></div>
  <div class="row it">${flow(110,[['asm',110,'#4b4a4a'],['list',139,'#2d2d2d'],['conf',166,'#2d2d2d'],['target',193,'#2d2d2d'],['ball',220,'#2d2d2d']].map(([n,x,c])=>[x,26,I(n,13,13,'','margin:3px 7px'),`height:19px;background:${c};border-top:1px solid #666`]).concat([[254.5,5,I('chevR',5,8,'#111')]]))}</div>
  <div class="row" style="height:18px;margin-left:4px;width:149px;background:#555;border:1px solid #8a8a8a;align-items:center;padding-left:2px">${I('funnel',10,11)}${I('caret',4,4,'#fff','margin:4px 0 0 2px')}</div>
  <div class="t"><div class="l">${TREE.map(([l,ic,t,w,f=''])=>{const x=[0,127,143,158.5][l];return `<div class="r" style="${f.includes('g')?'color:#858585':''}">${flow(110,[[x-12,5,f.includes('n')?'':I(f.includes('d')?'caret':'triR',f.includes('d')?6:4,6,'#eee')],[x,12.5,I(ic,12.5,12.5)],[l==1?143.500:l==2?159:174.500,w,T(w,esc(t))]])}</div>`}).join('')}</div><div class="v"></div></div>
  <div style="height:12px;width:154px;background:#f4f4f4;padding:6px 0 0 12px"><div style="width:40px;height:1px;background:#888"></div></div>`}
});

function train(){
  let seed=7;const rnd=()=>(seed=(seed*16807)%2147483647)/2147483647;
  let o='';
  const P=(pts,f,s='#0a0a0a',w=.7)=>o+=`<polygon points="${pts}" fill="${f}" stroke="${s}" stroke-width="${w}"/>`;
  const clutter=(x,y,w,h,n,cols)=>{for(let i=0;i<n;i++){const a=1.2+rnd()*5.5,b=1.2+rnd()*5,px=x+rnd()*(w-a),py=y+rnd()*(h-b);o+=`<rect x="${px.toFixed(1)}" y="${py.toFixed(1)}" width="${a.toFixed(1)}" height="${b.toFixed(1)}" fill="${cols[Math.floor(rnd()*cols.length)]}" stroke="#050505" stroke-width=".7"/>`}};
  const D=['#161616','#0d0d0d','#2b2b2b','#3c3c3c','#606060','#1c1c1c','#484848'];
  const wheel=(x,y,r)=>{o+=C(x,y,r,'#6c6c6c','stroke="#111" stroke-width="1"')+C(x-2,y-1.5,r*.82,'#626262','stroke="#080808" stroke-width="1.500"')+C(x-2,y-1.5,r*.72,'none','stroke="#222" stroke-width=".7"')+C(x-2,y-2,r*.34,'#303030','stroke="#0b0b0b"');for(let i=0;i<12;i++){const t=i*Math.PI/6;o+=C((x-2+Math.cos(t)*r*.55).toFixed(1),(y-1.5+Math.sin(t)*r*.55).toFixed(1),.75,'#0c0c0c')}};
  /* underframe bays */
  P('405,628 870,618 870,630 780,636 400,640','#1d1d1d');clutter(560,626,310,10,130,D);
  P('870,618 1050,617 1200,612 1050,634 870,631','#1d1d1d');clutter(850,619,220,13,120,D);
  /* left coupler end */
  P('358,636 400,634 404,655 398,667 375,665 372,652 364,649','#2c2c2c');P('370,640 386,637 386,651 372,653','#6f6f6f');P('386,640 393,638 394,653 386,653','#c9ccd4');P('374,655 398,653 399,666 375,665','#3d3d3d');P('397,643 428,641 428,658 397,658','#080808');P('419,650 428,646 429,666 431,670 419,670','#4a4a4a');
  P('347,621 400,622 402,633 366,636 348,632','#5c5c5c');P('364,622 379,622 379,633 364,634','#4a4a4a');P('401,636 448,633 450,645 402,646','#3a3a3a');clutter(400,632,55,13,30,D);
  /* one bogie, placed twice */
  const bogie=(dx,dy)=>{o+=`<g transform="translate(${dx} ${dy})">`;
   P('448,635 600,628 655,642 668,650 665,671 640,672 470,664 440,664 442,650','#141414');
   clutter(440,633,120,32,150,D);clutter(560,634,105,38,160,D);
   wheel(478,668,19);wheel(520,674,20);wheel(589,666,18.500);wheel(631,669,22);
   clutter(450,636,42,27,70,D);clutter(568,636,46,25,80,D);clutter(606,640,50,12,40,D);clutter(628,648,38,24,70,D);clutter(548,666,22,14,24,D);clutter(500,660,36,8,24,D);
   P('455,640 500,638 504,645 458,648','#6a6a6a');P('488,642 496,641 496,664 488,666','#4d4d4d');P('475,641 481,641 481,662 475,662','#3a3a3a');
   P('574,636 592,639 553,665 507,665 499,660 542,651','#6c6c6c');P('501,657 545,651 545,660 502,663','#585858');o+='<path d="M503 659l41-6" stroke="#0a0a0a" stroke-width=".8"/>';
   P('574,636 602,636 625,642 640,651 634,654 606,644 578,646','#5a5a5a');clutter(578,637,40,8,22,D);
   o+=`<defs><linearGradient id="sp${dx}" x1="0" x2="1"><stop offset="0" stop-color="#444"/><stop offset=".5" stop-color="#a5a5a5"/><stop offset="1" stop-color="#333"/></linearGradient></defs><rect x="512" y="632" width="28" height="17" rx="5" fill="url(#sp${dx})" stroke="#111" stroke-width=".7"/><path d="M512 641h28" stroke="#111" stroke-width=".8"/>`;
   o+=`<path d="M530 631l13 23 9-24M536 631l7 13 5-12" fill="none" stroke="#0a0a0a" stroke-width="3.200"/><path d="M530 631l13 23 9-24" fill="none" stroke="#666" stroke-width="1.600"/>`+C(466,661,4,'#555','stroke="#000"')+C(466,661,1.8,'#222')+C(592,641,3,'#666','stroke="#000"');
   o+='</g>'};
  bogie(0,0);
  /* hangers */
  for(const[x,y,h]of[[672,626,28],[686,627,30],[702,628,31],[715,630,30]]){P(`${x},${y} ${x+5},${y} ${x+6},${y+h-3} ${x+10},${y+h} ${x+1},${y+h}`,'#4e4e4e');o+=`<path d="M${x+1} ${y}v${h}" stroke="#0a0a0a" stroke-width="1.300"/>`}
  P('820,640 830,636 833,644 824,646','#181818');clutter(800,628,34,13,30,D);
  /* battery box */
  P('724,665 790,666 815,669 760,671 724,668','#1a1a1a');P('790,634 814,636 814,669 789,665','#393939');P('793,634 806,634 802,646 793,645','#111');P('724,632 788,633 790,666 724,665','#c4bfba');P('751,652 760,652 760,659 751,659','none');
  for(const[x,y]of[[735,637],[735,656],[776,637],[776,657],[776,642],[735,643]])o+=C(x,y,.9,'#222');
  /* selected unit */
  const B=['#0e2a33','#143b48','#1c5567','#0a0f12','#2a2a2a','#3d7f93','#4a5558','#0a0a0a'];
  clutter(832,628,60,22,110,B);clutter(836,640,62,15,90,B);P('886,630 903,634 902,656 888,655','#0b1c22','#1d6077');clutter(886,632,16,23,30,['#0a1418','#0e2a33','#1c5567']);P('851,644 862,644 862,653 851,653','#6b7075');
  /* control cabinet */
  P('930,634 933,634 933,652 930,652','#222');P('936,634 939,634 939,653 936,653','#222');
  P('943,633 1003,632 1019,629 1019,662 1003,663 943,661','#1b1b1b');P('1004,645 1016,644 1016,661 1004,661','#3c3c3c');
  for(const[x,w]of[[944,20],[966,14],[982,18]]){P(`${x},${636} ${x+w},${634} ${x+w},${657} ${x},${658}`,'#c1bcb6');for(const y of[638,644.5,651])P(`${x+w/2-3},${y} ${x+w/2+3},${y} ${x+w/2+3},${y+4.5} ${x+w/2-3},${y+4.5}`,'#b3ada7')}
  /* right bogie + end */
  P('1030,630 1070,625 1080,635 1060,640 1052,645 1034,637','#1c1c1c');clutter(1030,625,45,16,40,D);
  bogie(619,-14.500);
  P('1080,617 1300,612 1312,622 1300,628 1200,630 1100,625','#3b3b3b');clutter(1085,615,215,12,90,D);
  P('1196,616 1298,613 1304,621 1268,628 1200,622','#5e5e5e');P('1205,619 1222,617 1230,623 1210,624','#333');
  /* sills */
  P('401,620 560,617 720,613 870,609 973,607 973,618 870,622 640,627 401,631','#6b6b6b');
  P('973,609 1011,608 1011,618 973,619','#575757');P('981,609 987,609 987,619 981,619','#383838');
  P('1011,606 1120,603 1295,601 1297,621 1240,617 1195,612 1011,617','#6b6b6b');
  o+='<path d="M401 620L560 616.500 720 612.500 973 606.800M1011 605.500L1150 602 1308 600.500 1350 607" fill="none" stroke="#080808" stroke-width="2.200"/><path d="M540 618v9M1113 604v10M1195 603l2 9" stroke="#111"/>';
  P('1294,602 1308,601 1304,620 1296,621','#545454');P('1308,601 1350,606 1351,629 1348,637 1322,634 1314,626 1305,620','#4d4d4d');P('1331,613 1340,613 1340,630 1331,628','#d6d9e2');P('1350,608 1369,613 1366,632 1351,634','#636363');P('1352,610 1369,613 1357,622','#7a7a7a');P('1313,632 1325,634 1325,650 1316,650 1316,646 1320,646 1320,640 1313,638','#505050');P('1322,630 1348,634 1346,640 1322,638','#222');
  clutter(1308,624,42,12,24,D);P('1312,606 1318,606 1316,616 1312,616','#333');
  P('1163,609 1180,608 1180,615 1163,616','#222');P('1239,613 1246,613 1246,620 1239,620','#999');P('1250,615 1264,614 1272,622 1256,622','#7a7a7a');
  return o;
}
customElements.define('cad-viewport',class extends Base{
  css(){return `:host{flex:1;position:relative;border-right:1px solid #777;background:radial-gradient(ellipse 430px 300px at 960px 150px,#dde0ebcc,#e0e3ed88 45%,transparent 100%),radial-gradient(ellipse 620px 240px at 0 0,#fff 0,#fffffff0 60%,#fff0 100%),linear-gradient(180deg,#fdfdfe 0,#f7f8fb 18%,#eceef5 32%,#e5e7f0 43%,#e2e4ee 53%,#ebecf4 59%,#f7f7fb 66%,#fdfdfe 73%,#fff 82%,#fafafc 100%)}
  .hud,.mt,.bc,.tp,.sp{position:absolute;display:flex;align-items:center}.hud{left:0;top:1.500px;height:18px}.mt{left:41.500px;top:26.500px;height:16px}.bc{left:10px;top:46px;height:17px;width:95px;border:1px solid #ccc;background:#f6f6f6}
  .tp{right:-1px;top:51px;width:18px;flex-direction:column;background:#2c2c2c;border:1px solid #777}.tp div{height:16.200px;width:16px;padding:1.500px 2px;border-bottom:1px solid #777}
  .sp{left:-1px;top:286px;width:6px;height:26px;background:#444;justify-content:center}.sp::before{content:"";width:3px;height:3px;border-radius:2px;background:#ccc}
  .m{position:absolute;inset:0}`}
  html(){const c='#777';const g=(a,b,n,h,col=c)=>[a,b-a,I(n,b-a,h||12,col)];const k=x=>[x-2,4,I('caret',4,4,'#666')];
  return `<svg class="m" width="1145" height="597" viewBox="266 365 1145 597">${train()}
   <path d="M828.500 662h5M831 659.500v5" stroke="#4d9ad6" stroke-width=".9"/><path d="M864.500 639.500v13l3-2.700 2 4.700 2.200-1-2-4.500h4z" fill="#fff" stroke="#555" stroke-width=".4"/>
   <path d="M293.500 923V906" stroke="#6fe07a" stroke-width="1.500"/><path d="M290 909l3.500-7 3.500 7z" fill="#5fd96a"/><path d="M293 923H280" stroke="#c41818" stroke-width="1.800"/><path d="M284 920l-8.500 3 8.500 3z" fill="#c41818"/><path d="M293 923l7 1" stroke="#14148c" stroke-width="2.200"/><path d="M297 921l7 3-7 2.500z" fill="#14148c"/>${C(293.500,923,1.6,'#333')}
   ${TX(294.5,899,5.5,'Y','#3f8a46',400)}${TX(272.5,924.500,5.500,'X','#c33',400)}${TX(305.500,925,5.500,'Z','#22a',400)}</svg>
  <div class="hud">${flow(266,[g(719,731,'zoomfit'),g(736,749,'zoomarea'),g(754,767,'pencil'),g(772,784,'section'),g(789,802,'wirecube'),k(809),g(816,829,'cube'),k(836),[841,26,flow(0,[[3,12,I('eye',12,12)],[20,4,I('caret',4,4,'#444')]]),'display:flex;align-items:center;height:17px;background:linear-gradient(90deg,#b9b9b9 17px,#e6e6e6 17px);border:1px solid #999'],g(871,884,'ball2',13),g(888,901,'scene',13),k(908),g(915,929,'monitor'),k(935),g(943,955,'axis',13),g(1323,1332,'paneL',10,'#999'),g(1341,1350,'paneR',10,'#999'),g(1359,1366,'mins',9,'#888'),g(1375,1386,'restore',10,'#888'),g(1394,1402,'xs',8,'#999')])}</div>
  <div class="mt">${I('hook',10,9)}<div style="display:flex;margin-left:3px;border-left:1px solid #ccc">${['mateA','matePar','matePar','ring','ring','ringG','mateD','mateG'].map(n=>`<div style="width:16.800px;height:16px;border:1px solid #d3d3d3;border-left:0;padding:1px 2px">${I(n,12.500,12)}</div>`).join('')}</div><div style="margin-left:4px">${I('triR',7,10,'#777')}</div></div>
  <div class="bc">${flow(0,[[8,13,I('asm',13,12)],[22,5,I('chevR',5,15,'#ccc')],[30,12,I('asm',12,12)],[44,5,I('chevR',5,15,'#ccc')],[51,12,I('part',12,12)],[66,28,I('cube',12,12,'','margin-left:7px'),'height:15px;padding-top:1px;background:#b5d5e6;clip-path:polygon(0 0,100% 0,100% 100%,0 100%,6px 50%)']])}</div>
  <div class="tp">${['home','books','pfold','yel','ball','list','sync'].map((n,i)=>`<div style="${i?'':'background:#a9b4b8'}">${I(n,12,12)}</div>`).join('')}</div><div class="sp"></div>`}
});
customElements.define('cad-status',class extends Base{
  css(){return `:host{color:#eee;font-size:8.300px;line-height:11px;background:#4a4a4a}.a{height:11px;display:flex;border-top:1px solid #666}.b{height:13px;display:flex;align-items:center;border-top:1px solid #6b6b6b}`}
  html(){const t=(a,b,s,st='')=>[a,b-a,T(b-a,s),st];return `<div class="a">${flow(110,[[110,62,'<div style="display:flex;gap:2px;padding:2px 0 0 20px;color:#777;font-size:6px;line-height:8px">'+['|◂','◂','▸','▸|'].map(s=>`<span style="width:9px;text-align:center;background:#b5b5b5">${s}</span>`).join('')+'</div>','background:#a5a5a5;height:11px'],t(181,205,'<b>Model</b>'),[211,74,`<div style="padding-left:6px">${T(54.5,'Motion Study 1')}</div>`,'background:#3c3c3c;height:10px;line-height:10px;border-right:1px solid #888;border-left:1px solid #777']])}</div>
  <div class="b">${flow(110,[t(111,245,'SOLIDWORKS Professional 2023 SP5.0','color:#ddd'),t(987.5,1039.5,'Length: 20mm'),t(1046.5,1097.5,'Under Defined'),t(1104.5,1191,'Large Assembly Settings'),t(1198,1260,'Editing Assembly'),t(1338,1366,'Custom'),[1376.5,5,F&&`<svg width="5" height="4" viewBox="0 0 5 4">${F('M0 4L2.500 0 5 4z','#fff')}</svg>`],[1399,10,I('tag',10,9)]])}</div>`}
});
customElements.define('remote-taskbar',class extends Base{
  css(){return `:host{height:29px;background:#212121;display:flex;color:#eee;font-size:8.500px;line-height:11px;overflow:hidden;align-items:flex-start}.i{height:29px;display:flex;flex-direction:column;align-items:center;position:relative}.d{width:4px;height:2px;border-radius:1px;background:#999;position:absolute;bottom:0}`}
  html(){const ic=(a,b,n,d)=>[a,b-a,`<div class="i" style="padding-top:8px">${I(n,b-a,16)}${d?'<div class="d"></div>':''}</div>`];const t=(a,b,s,y)=>[a,b-a,T(b-a,s),`margin-top:${y}px`];
  return flow(110,[[123,17,I('smoke',17,16),'margin-top:6px'],[145,25,T(18,'32°C')+T(25,'Smoke'),'margin-top:4.500px'],ic(483,500,'win'),
   [508.5,148.5,flow(0,[[8,10,I('search',10,10)],[24.5,28,T(28,'Search')],[112,36,I('bag',18,12,'','margin-left:9px'),'height:18px;padding-top:3px;border-radius:9px;background:#5a564d']]),'display:flex;align-items:center;height:22px;margin-top:5px;border-radius:11px;background:#414141;font-size:9.500px'],
   ic(666,682,'taskview'),ic(695,711,'bubble'),ic(724,742,'folder',1),ic(755,771,'edgebag'),ic(785,801,'store'),ic(814,831,'chrome',1),ic(844,861,'outlook',1),ic(876,889,'calc'),
   [904,20,`<div class="i" style="padding-top:8px">${I('teams',18,15)}<div style="position:absolute;right:-1px;top:4px;width:10px;height:10px;border-radius:5px;background:#c93838;font-size:6.500px;line-height:10px;text-align:center">9+</div><div class="d"></div></div>`],
   [928,27,`<div class="i" style="padding-top:7px;background:#333;height:29px">${I('sw',17,18)}<div class="d" style="width:11px;background:#4cc2ff"></div></div>`],
   ic(964,980,'todo',1),ic(994,1010,'teamsLight',1),ic(1023,1040,'toys',1),
   [1227,9,I('chevU',9,7,'#eee'),'margin-top:12px'],[1248,10,I('micO',10,13,'#6cc5cf'),'margin-top:9px'],[1271,16,T(16,'ENG')+T(9,'IN','margin-left:3.5px'),'margin-top:5px'],[1298,12,I('pc',12,13),'margin-top:9px'],[1315,12,I('speaker',12,11),'margin-top:10px'],
   [1337.5,43,T(20,'13:06','margin-left:22.5px')+T(42.5,'06-11-2024'),'margin-top:4.500px'],[1388,12,I('bellO',11,13),'margin-top:9px']])}
});
customElements.define('cad-window',class extends Base{
  css(){return `:host{width:1302px;height:727px;background:#4a4a4a;overflow:hidden}.m{display:flex;height:597px}`}
  html(){return `<cad-menu></cad-menu><cad-ribbon></cad-ribbon><div class="m"><cad-tree></cad-tree><cad-viewport></cad-viewport></div><cad-status></cad-status><remote-taskbar></remote-taskbar>`}
});

customElements.define('meeting-stage',class extends Base{
  css(){return `:host{width:1520px;position:relative;background:#f5f5f5}.t{display:flex;gap:4px;justify-content:center;padding-top:4px;height:172px}.c{padding-left:110px;background:linear-gradient(90deg,#f9f9f9 110px,transparent 110px)}.o{position:absolute;left:15px;bottom:14.500px}`}
  html(){return `<div class="t">
  <video-tile bg="radial-gradient(circle at 25% 15%,#f5ecf1,transparent 45%),radial-gradient(circle at 95% 85%,#f0f5e6,transparent 50%),linear-gradient(170deg,#eff0f3 10%,#e8eaf0 40%,#e5f1ec 80%)" abg="#f3d6d8" fg="#6e2b34" text="N" tw="22" name="nihaal (Guest)" nw="90"></video-tile>
  <video-tile active bg="radial-gradient(circle at 30% 60%,#ecdff2,transparent 55%),linear-gradient(160deg,#e5e3f3 5%,#eee6f1 50%,#f5ece8 95%)" abg="#d4d2e8" fg="#2f2a66" text="TS" tw="36" name="Taranpreet Saini (Guest)" nw="156"></video-tile>
  <video-tile bg="radial-gradient(circle at 5% 20%,#f6e0dc,transparent 50%),linear-gradient(170deg,#f3e3ea 10%,#f2e3e5 50%,#f0f1ec 92%)" abg="#fde9d3" fg="#8a5a22" text="AC" tw="41"></video-tile></div>
  <div class="c"><cad-window></cad-window></div><div class="o"><name-tag alpha=".72" text="Taranpreet Saini (Guest)" tw="156"></name-tag></div>`}
});
customElements.define('win-taskbar',class extends Base{
  css(){return `:host{height:60px;border-top:1px solid #4a4440;background:linear-gradient(90deg,#232628 0,#2c251e 60px,#312418 180px,#312418 1460px,#2a261c 1510px,#182a2c 1570px,#14282e 100%);display:flex;color:#fff;font-size:15.500px;line-height:20px}
  .i{height:59px;display:flex;flex-direction:column;align-items:center;justify-content:center;position:relative}.d{position:absolute;bottom:6px;width:8px;height:4px;border-radius:2px;background:#9b948e}.box{width:50px;height:50px;border-radius:5px;display:flex;align-items:center;justify-content:center}`}
  html(){const ic=(a,b,n,d=1)=>[a,b-a,`<div class="i">${I(n,b-a,n=='win'?29:30)}${d?'<div class="d"></div>':''}</div>`];
  return flow(0,[ic(643,672,'win',0),ic(699,729,'edge'),ic(753.5,784,'folder'),ic(809,839,'outlook'),ic(864,894,'printer',0),
   [909,50,`<div class="i"><div class="box" style="background:#41352b;border:1px solid #4d4137">${I('teams',30,29)}</div><div style="position:absolute;left:26px;top:8px;width:20px;height:20px;border-radius:50%;background:#4cc2ff;color:#111;text-align:center;font-size:14px">1</div><div class="d" style="width:20px;background:#4cc2ff"></div></div>`],
   ic(974,1003,'excel'),ic(1029,1059,'nitro'),ic(1084,1114,'chrome'),ic(1139,1168,'word'),ic(1194,1223,'ppt'),
   [1239,50,`<div class="i"><div class="box" style="background:#83434f">${I('zip',29,29)}</div><div class="d" style="background:#ff97a8"></div></div>`],
   [1516,15,I('chevU',14,11,'#fff'),'margin-top:23px'],[1553,20,I('cloud',20,20),'margin-top:19px'],[1594,18,I('micO',18,21,'#7fd0da'),'margin-top:18px'],[1637,28,T(28,'ENG')+T(15,'IN','margin-left:6.5px'),'margin-top:9.500px'],[1688,20,I('wifi',20,20),'margin-top:18px'],[1718,20,I('speaker',20,18),'margin-top:20px'],[1747,21,I('battery',21,19),'margin-top:19px'],
   [1788,78,T(36,'13:06','margin-left:42px')+T(77.5,'06-11-2024'),'margin-top:8px'],[1875,21,I('bell',21,22),'margin-top:18px']])}
});
customElements.define('meeting-app',class extends Base{
  css(){return `:host{width:1920px;height:1080px;display:flex;flex-direction:column}.m{height:904px;display:flex}meeting-toolbar{z-index:1}`}
  html(){return `<title-bar></title-bar><meeting-toolbar></meeting-toolbar><div class="m"><meeting-stage></meeting-stage><participants-panel></participants-panel></div><win-taskbar></win-taskbar>`}
});
</script>
</body>
</html>
